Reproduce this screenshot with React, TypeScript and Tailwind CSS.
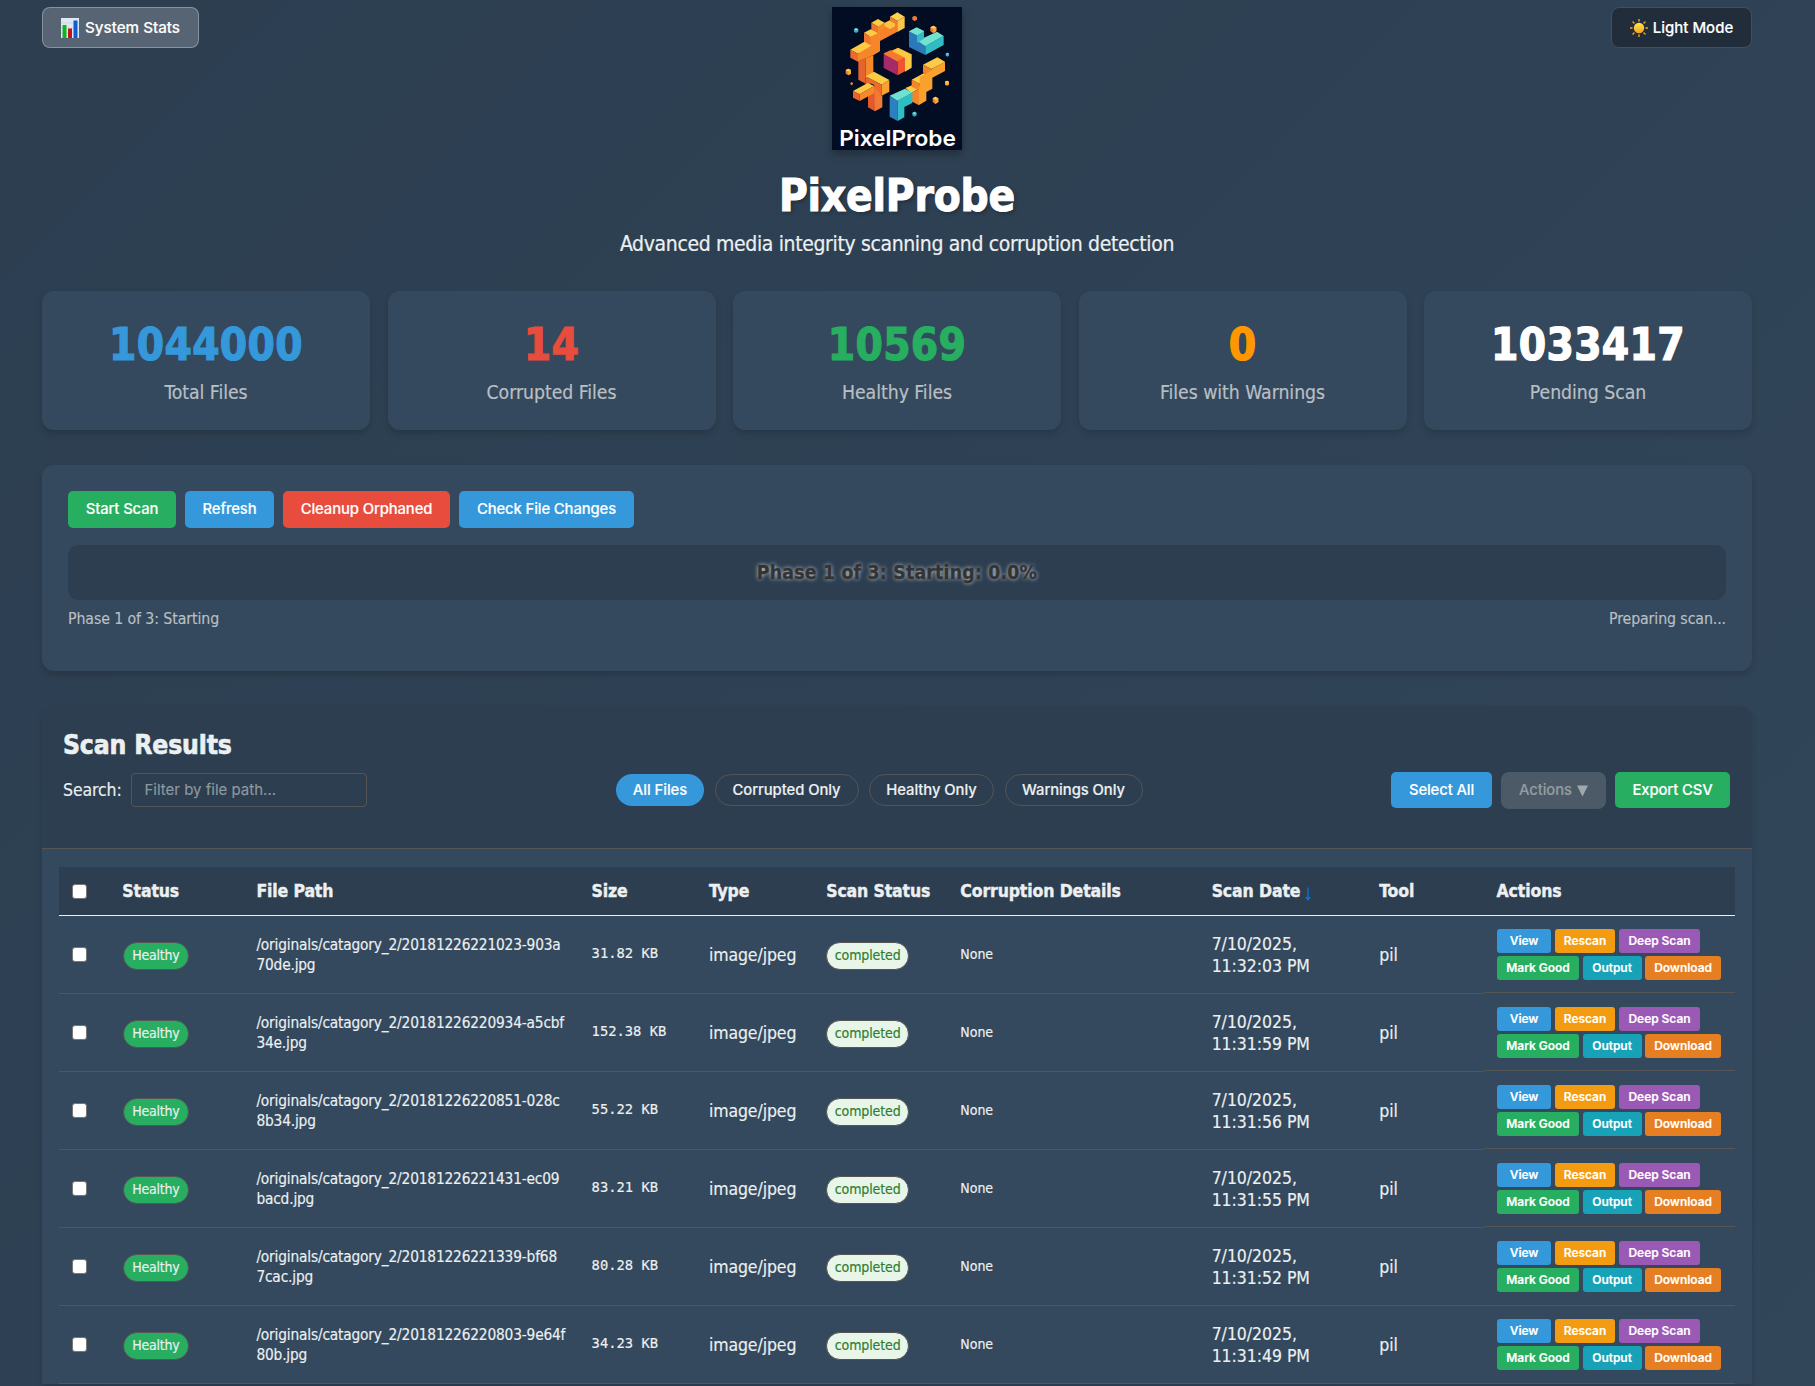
import React from 'react';

const stats = [
  { value: '1044000', label: 'Total Files', color: 'text-[#3498db]' },
  { value: '14', label: 'Corrupted Files', color: 'text-[#e74c3c]' },
  { value: '10569', label: 'Healthy Files', color: 'text-[#27ae60]' },
  { value: '0', label: 'Files with Warnings', color: 'text-[#ff9800]' },
  { value: '1033417', label: 'Pending Scan', color: 'text-white' },
];

const rows = [
  { path: ['/originals/catagory_2/20181226221023-903a', '70de.jpg'], size: '31.82 KB', time: '11:32:03 PM' },
  { path: ['/originals/catagory_2/20181226220934-a5cbf', '34e.jpg'], size: '152.38 KB', time: '11:31:59 PM' },
  { path: ['/originals/catagory_2/20181226220851-028c', '8b34.jpg'], size: '55.22 KB', time: '11:31:56 PM' },
  { path: ['/originals/catagory_2/20181226221431-ec09', 'bacd.jpg'], size: '83.21 KB', time: '11:31:55 PM' },
  { path: ['/originals/catagory_2/20181226221339-bf68', '7cac.jpg'], size: '80.28 KB', time: '11:31:52 PM' },
  { path: ['/originals/catagory_2/20181226220803-9e64f', '80b.jpg'], size: '34.23 KB', time: '11:31:49 PM' },
];

const UI = "font-['Inter',sans-serif]";
const COLS =
  'grid grid-cols-[50.3px_134.1px_335.2px_117.3px_117.3px_134.1px_251.4px_167.6px_117.3px_1fr]';

function Logo() {
  return (
    <svg width="130" height="143" viewBox="0 0 390 429" className="block shadow-[0_4px_8px_rgba(0,0,0,0.3)]">
      <rect width="390" height="429" fill="#020d24" />
      {/* left orange arm, top to bottom */}
      <g transform="translate(-36 -21)">
        <path d="M174 80l20-12 16 16 22-12v23l-52 28v30l-20 12-46-5 38-60z" fill="#f5822a" />
        <path d="M174 79l38-20 20 11v5l-22 12-18-9-18 10z" fill="#fbc340" />
        <path d="M210 50l22-13 22 13-22 13z" fill="#fdd24e" />
        <path d="M210 50l22 13v32l-7-4v-20l-15-8z" fill="#f07e2c" />
        <path d="M232 63l22-13v34l-22 12z" fill="#fac548" />
        <path d="M154 68l20-11 20 11-20 12z" fill="#fccb46" />
        <path d="M154 68l20 12v20l-20-10z" fill="#ee7430" />
        <path d="M174 80l20-12v16l-20 16z" fill="#f68a2a" />
        <path d="M132 98l20-10 22 12-22 11z" fill="#fccb46" />
        <path d="M132 98l20 13v26l-20-11z" fill="#ee7430" />
        <path d="M152 111l22-11 6 3v50l-28-14z" fill="#f6862a" />
        <path d="M91 149l42-24 22 12-41 24z" fill="#fcc942" />
        <path d="M91 149l23 12v24l-23-12z" fill="#ea6a30" />
        <path d="M114 161l41-24 25-10v26l-20 12-46 20z" fill="#f6862a" />
        <path d="M115 184l22-9v76l-22-12z" fill="#e5632c" />
        <path d="M137 175l23-10v56l-23 12z" fill="#f6882b" />
        <path d="M137 229l26 14-12 8-14 2z" fill="#e8672d" />
        <path d="M137 229l25-14 46 25-23 14z" fill="#fccb45" />
        <path d="M150 236l35 18v33l-22-12v-20l-13-6z" fill="#ec6c2e" />
        <path d="M185 254l23-14v35l-23 12z" fill="#f9a031" />
        <path d="M144 272l21-14v76l-21-12z" fill="#e2592c" />
        <path d="M163 262l22 25 2 0v35l-22 12z" fill="#f17a34" />
        <path d="M99 273l44-24 20 9-44 25z" fill="#fcc843" />
        <path d="M99 273l20 10v20l-20-10z" fill="#ea632f" />
        <path d="M119 283l44-25v21l-44 24z" fill="#f68a2a" />
      </g>
      {/* centre cube */}
      <path d="M155 139l43-16 25 13-46 26z" fill="#f47a2d" />
      <path d="M178 134l20-12 41 20-20 13z" fill="#fbc83f" />
      <path d="M155 140l42 22v43l-42-22z" fill="#a52b68" />
      <path d="M155 140l20-10 44 22-22 12z" fill="#f47b2c" />
      <path d="M197 163l22-11v41l-22 12z" fill="#f0552f" />
      <path d="M219 152l20-11v41l-20 12z" fill="#fbc944" />
      {/* upper right teal piece */}
      <path d="M231 73l23-12 22 11v20l39-18 20 13-55 31-49-25z" fill="#72e3cf" />
      <path d="M231 73l24 12v15l25 18v26l-49-24z" fill="#2c79b9" />
      <path d="M255 85l21-12v22l-21 12z M280 117l55-31v28l-55 30z" fill="#31bcc4" />
      {/* right orange arm */}
      <path d="M273 173l43-22 24 14-42 21z M239 218l37-20 24 12-38 20z M220 243l22-9 18 12-22 12z" fill="#fccb48" />
      <path d="M273 173l25 13v23l-22-12h-3z M239 218l24 12v22l-24-13z M238 258l23-12v49l-23-12z" fill="#f58529" />
      <path d="M298 186l41-21v27l-38 20v33l-18 10v26l-22 13v-50l2-15 0-19 35-20z" fill="#f9a12d" />
      {/* lower teal piece */}
      <path d="M173 266l46-21 23 12-46 25z" fill="#6ee2cf" />
      <path d="M173 267l24 14v61l-24-13z" fill="#2d7fc0" />
      <path d="M197 281l44-25v32l-24 12v31l-20 11z" fill="#2fbdc4" />
      {/* floating cubes */}
      <g fill="#f07a35">
        <path d="M241 30l7-4 7 4v8l-7 4-7-4z M41 189l8-4 8 4v11l-8 5-8-5z M295 61l9-5 9 5v11l-9 7-9-7z M302 274l8-5 9 5v11l-9 6-8-6z M55 228l4-3 4 3v4l-4 3-4-3z" />
        <path d="M339 224l6-3 6 3v9l-6 3-6-3z" fill="#f6a936" />
      </g>
      <path d="M41 189l8-4 8 4-8 5z M295 61l9-5 9 5-9 5z M302 274l8-5 9 5-9 5z M339 224l6-3 6 3-6 4z" fill="#fcd255" />
      <path d="M49 194l8-5v11l-8 5z M304 66l9-5v11l-9 7z M310 279l9-5v11l-9 6z" fill="#f9ab36" />
      <path d="M66 67l6-4 7 4v7l-7 4-6-4z M241 318l6-4 7 4v7l-7 4-6-4z M341 140l5-3 5 3v6l-5 3-5-3z" fill="#36aec6" />
      <path d="M66 67l6-4 7 4-7 4z M241 318l6-4 7 4-7 4z M341 140l5-3 5 3-5 3z" fill="#6ee0cf" />
      <text x="196.5" y="417" textAnchor="middle" textLength="350" lengthAdjust="spacingAndGlyphs" fontFamily="Inter" fontWeight="600" fontSize="66" fill="#fff">
        PixelProbe
      </text>
    </svg>
  );
}

function ChartIcon() {
  return (
    <svg width="18" height="20" viewBox="0 0 18 20">
      <rect width="18" height="20" fill="#dfe8f2" />
      <path d="M0 5h18M0 10h18M0 15h18" stroke="#c3d0de" strokeWidth=".7" />
      <rect x="1.5" y="7" width="4" height="13" fill="#0fb51c" />
      <rect x="7" y="10.5" width="4" height="9.5" fill="#c1131b" />
      <rect x="12.5" y="2.5" width="4" height="17.5" fill="#0b5fd0" />
    </svg>
  );
}

function SunIcon() {
  return (
    <svg width="18" height="18" viewBox="0 0 18 18">
      <defs>
        <linearGradient id="sun" x1="0" y1="0" x2="0" y2="1">
          <stop offset="0" stopColor="#ffe94a" />
          <stop offset="1" stopColor="#f9a01c" />
        </linearGradient>
      </defs>
      <circle cx="9" cy="9" r="5.2" fill="url(#sun)" />
      <path
        d="M9 .6v1.4M9 16v1.4M.6 9h1.4M16 9h1.4M3 3l1 1M14 14l1 1M3 15l1-1M14 4l1-1"
        stroke="#f2ab27"
        strokeWidth="1.4"
        strokeLinecap="round"
      />
    </svg>
  );
}

function Box() {
  return <span className="block h-[15px] w-[15px] rounded-[3px] border border-[#767676] bg-white" />;
}

function Btn({ className, children }: { className: string; children: React.ReactNode }) {
  return (
    <button className={`${UI} flex items-center justify-center rounded-[5px] text-[14.8px] font-medium tracking-[-0.1px] whitespace-nowrap text-white ${className}`}>
      {children}
    </button>
  );
}

function Mini({ className, children }: { className: string; children: React.ReactNode }) {
  return (
    <button className={`${UI} flex h-6 items-center justify-center rounded-[3px] text-[12px] font-semibold tracking-[-0.05px] whitespace-nowrap text-white ${className}`}>
      {children}
    </button>
  );
}

export default function App() {
  return (
    <div className="h-[1386px] w-[1815px] overflow-hidden bg-[linear-gradient(135deg,#2c3e50_0px,#34495e_3200px)] pt-[7px] pl-[42px] font-['DejaVu_Sans_Condensed','DejaVu_Sans',sans-serif] text-[17.5px] text-[#ecf0f1] [font-stretch:condensed] [-webkit-text-stroke:0.15px_currentColor]">
      <div className="w-[1710px]">
        <header className="flex h-[284px] items-start justify-between">
          <div className="w-[400px]">
            <button className={`${UI} flex h-[41px] w-[157px] items-center justify-center gap-[6px] rounded-[8px] border border-white/30 bg-white/20 text-[15.2px] font-medium text-white`}>
              <ChartIcon />
              <span className="pt-px">System Stats</span>
            </button>
          </div>
          <div className="flex flex-col items-center">
            <Logo />
            <h1 className="mt-[20px] text-[43.75px] leading-[52px] font-bold tracking-[-0.2px] text-white [-webkit-text-stroke:1px_white] [text-shadow:2px_2px_4px_rgba(0,0,0,0.3)]">PixelProbe</h1>
            <p className="mt-[8px] text-[21px] leading-[28px] tracking-[-0.36px] whitespace-nowrap [-webkit-text-stroke:0.2px_#ecf0f1]">Advanced media integrity scanning and corruption detection</p>
          </div>
          <div className="flex w-[400px] justify-end">
            <button className={`${UI} flex h-[41px] w-[141px] items-center justify-center gap-[5px] rounded-[8px] border border-[#444f5a] bg-[#212d3a] text-[15px] font-medium text-white`}>
              <SunIcon />
              <span className="pt-px">Light Mode</span>
            </button>
          </div>
        </header>

        <section className="grid grid-cols-5 gap-[17.5px]">
          {stats.map((s) => (
            <div key={s.label} className="flex h-[139px] flex-col items-center rounded-[12px] bg-[#34495e] pt-[28px] shadow-[0_4px_6px_rgba(0,0,0,0.15)]">
              <div className={`text-[43.75px] leading-[52px] font-bold tracking-[0.3px] [-webkit-text-stroke:1.2px_currentColor] ${s.color}`}>{s.value}</div>
              <div className="mt-[8px] text-[19.25px] leading-[28px] tracking-[-0.03px] text-[#b9bfc3] [-webkit-text-stroke:0.2px_#b9bfc3]">{s.label}</div>
            </div>
          ))}
        </section>

        <section className="mt-[35px] h-[206px] rounded-[12px] bg-[#34495e] px-[26px] pt-[26px] shadow-[0_4px_6px_rgba(0,0,0,0.15)]">
          <div className="flex gap-[9px]">
            <Btn className="h-[37px] w-[108px] bg-[#27ae60]">Start Scan</Btn>
            <Btn className="h-[37px] w-[89px] bg-[#3498db]">Refresh</Btn>
            <Btn className="h-[37px] w-[167px] bg-[#e74c3c]">Cleanup Orphaned</Btn>
            <Btn className="h-[37px] w-[175px] bg-[#3498db]">Check File Changes</Btn>
          </div>
          <div className="mt-[17px] flex h-[55px] items-center justify-center rounded-[11px] bg-[#2c3e50] pt-[2px] text-[19.25px] font-bold tracking-[0.22px] text-[#333] [-webkit-text-stroke:0.3px_#333] [text-shadow:0_0_4px_rgba(255,255,255,0.8)]">
            Phase 1 of 3: Starting: 0.0%
          </div>
          <div className="mt-[7px] flex justify-between text-[15.75px] leading-[24px] tracking-[-0.1px] text-[#b9bfc3]">
            <span>Phase 1 of 3: Starting</span>
            <span>Preparing scan...</span>
          </div>
        </section>

        <section className="mt-[35px] overflow-hidden rounded-t-[12px] bg-[#34495e] shadow-[0_4px_6px_rgba(0,0,0,0.15)]">
          <div className="h-[143px] border-b border-[#555] bg-[#2c3e50] pt-[21px] pr-[22px] pl-[21px]">
            <h2 className="text-[26.25px] leading-[36px] font-bold tracking-[-0.15px] [-webkit-text-stroke:0.6px_#ecf0f1]">Scan Results</h2>
            <div className="mt-[9px] flex h-[37px] items-start">
              <div className="flex w-[553px] items-center gap-[10px] pt-px">
                <span className="w-[58px] text-[17.5px] tracking-[-0.1px]">Search:</span>
                <div className={`${UI} flex h-[34px] w-[236px] items-center rounded-[4px] border border-[#555] pl-[12.5px] text-[15px] text-[#8e989f]`}>
                  Filter by file path...
                </div>
              </div>
              <div className={`${UI} flex gap-[10.5px] pt-[2px] text-[14.8px] font-medium tracking-[-0.05px]`}>
                <span className="flex h-8 w-[88px] items-center justify-center rounded-full bg-[#3498db] text-white">All Files</span>
                <span className="flex h-8 w-[144px] items-center justify-center rounded-full border border-[#555]">Corrupted Only</span>
                <span className="flex h-8 w-[125px] items-center justify-center rounded-full border border-[#555]">Healthy Only</span>
                <span className="flex h-8 w-[138px] items-center justify-center rounded-full border border-[#555]">Warnings Only</span>
              </div>
              <div className="ml-auto flex gap-[9px]">
                <Btn className="h-9 w-[101px] bg-[#3498db]">Select All</Btn>
                <Btn className="h-[37px] w-[105px] rounded-[8px]! bg-[#4c5966] text-[#939ca3]!">
                  Actions
                  <svg width="11" height="12" viewBox="0 0 11 12" className="ml-[5px]">
                    <path d="M0 .5h11L5.5 11.5z" fill="#a0a7ad" />
                  </svg>
                </Btn>
                <Btn className="h-9 w-[115px] bg-[#27ae60]">Export CSV</Btn>
              </div>
            </div>
          </div>

          <div className="px-[17px] pt-[18px]">
            <div className={`${COLS} h-[49px] items-center border-b border-[#ecf0f1] bg-[#2c3e50] font-bold tracking-[-0.13px] [-webkit-text-stroke:0.4px_#ecf0f1] [&>*]:pl-[13px]`}>
              <div><Box /></div>
              <div>Status</div>
              <div>File Path</div>
              <div>Size</div>
              <div>Type</div>
              <div className="whitespace-nowrap">Scan Status</div>
              <div>Corruption Details</div>
              <div className="flex items-center whitespace-nowrap">
                Scan Date
                <svg width="6" height="14" viewBox="0 0 6 14" className="mt-[5px] ml-[5px]">
                  <path d="M3 .5v12M.8 10.2L3 12.7l2.2-2.5" fill="none" stroke="#007bff" strokeWidth="1.1" />
                </svg>
              </div>
              <div>Tool</div>
              <div>Actions</div>
            </div>
            {rows.map((r, i) => (
              <div key={r.time} className={`${COLS} h-[78px] [&>*]:flex [&>*]:h-[78px] [&>*]:items-center [&>*]:border-b [&>*]:border-[#555] [&>*]:pl-[13px] [&>*]:whitespace-nowrap`}>
                <div><Box /></div>
                <div className="pt-[2px]">
                  <span className="ml-[0.6px] flex h-7 w-[66px] items-center justify-center rounded-full border border-[#555] bg-[#27ae60] text-[14px] tracking-[-0.2px]">Healthy</span>
                </div>
                <div className="text-[15.3px] leading-[20px] tracking-[-0.17px]">
                  <div>
                    {r.path[0]}
                    <br />
                    {r.path[1]}
                  </div>
                </div>
                <div className="pb-[2px] font-['DejaVu_Sans_Mono',monospace] text-[13.8px] [font-stretch:normal]">{r.size}</div>
                <div className="pt-[2px] tracking-[-0.1px]">image/jpeg</div>
                <div className="pt-[2px]">
                  <span className="flex h-7 w-[83px] items-center justify-center rounded-full border border-[#555] bg-[#e8f5e9] text-[14px] tracking-[-0.1px] text-[#2e7d32]">completed</span>
                </div>
                <div className="text-[14px]">None</div>
                <div className="pt-px leading-[22px] tracking-[-0.05px]">
                  <div>
                    7/10/2025,
                    <br />
                    {r.time}
                  </div>
                </div>
                <div className="pt-[2px]">pil</div>
                <div className={`pl-[13.5px]! ${i < 4 ? 'h-[77px]!' : ''}`}>
                  <div className="flex flex-col gap-[3px]">
                    <div className="flex gap-[4px]">
                      <Mini className="w-[54px] bg-[#3498db]">View</Mini>
                      <Mini className="w-[60px] bg-[#f39c12]">Rescan</Mini>
                      <Mini className="w-[81px] bg-[#9b59b6]">Deep Scan</Mini>
                    </div>
                    <div className="flex gap-[3.5px]">
                      <Mini className="w-[82px] bg-[#27ae60]">Mark Good</Mini>
                      <Mini className="w-[59px] bg-[#17a2b8]">Output</Mini>
                      <Mini className="w-[76px] bg-[#e67e22]">Download</Mini>
                    </div>
                  </div>
                </div>
              </div>
            ))}
          </div>
        </section>
      </div>
    </div>
  );
}
